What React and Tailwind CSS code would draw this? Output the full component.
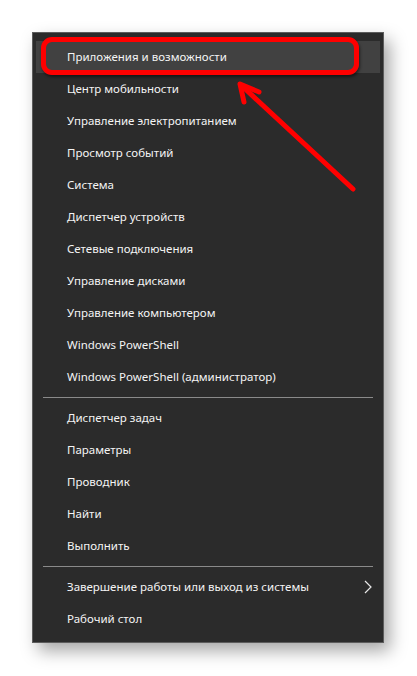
import React from "react";

const group1 = [
  "Приложения и возможности",
  "Центр мобильности",
  "Управление электропитанием",
  "Просмотр событий",
  "Система",
  "Диспетчер устройств",
  "Сетевые подключения",
  "Управление дисками",
  "Управление компьютером",
  "Windows PowerShell",
  "Windows PowerShell (администратор)",
];
const group2 = ["Диспетчер задач", "Параметры", "Проводник", "Найти", "Выполнить"];

function Row({ label, active, chevron }) {
  return (
    <div
      className={
        "h-[32px] flex items-center text-[11.5px] text-[#f4f4f4] " +
        (active ? "bg-[#414141] mx-[3px] pl-[31px] pr-[7px]" : "pl-[34px] pr-[10px]")
      }
    >
      <span className="flex-1 whitespace-nowrap">{label}</span>
      {chevron && (
        <svg width="8" height="14" viewBox="0 0 8 14" className="mr-[1px]">
          <path d="M1 1 L7 7 L1 13" fill="none" stroke="#e8e8e8" strokeWidth="1.2" />
        </svg>
      )}
    </div>
  );
}

function Sep() {
  return (
    <div className="h-[9px] flex items-center px-[10px]">
      <div className="h-px w-full bg-[#8a8a8a]" />
    </div>
  );
}

export default function App() {
  return (
    <div
      className="w-[417px] h-[676px] bg-white relative overflow-hidden"
      style={{ fontFamily: '"Noto Sans", "Open Sans", sans-serif' }}
    >
      <div className="absolute left-[32px] top-[32px] w-[352px] h-[611px] bg-[#2b2b2b] border border-[#5c5c5c] shadow-[6px_8px_16px_rgba(0,0,0,0.35)] pt-[8px]">
        {group1.map((l, i) => (
          <Row key={l} label={l} active={i === 0} />
        ))}
        <Sep />
        {group2.map((l) => (
          <Row key={l} label={l} />
        ))}
        <Sep />
        <Row label="Завершение работы или выход из системы" chevron />
        <Row label="Рабочий стол" />
      </div>
      {/* annotation box */}
      <div className="absolute left-[41px] top-[37px] w-[318px] h-[38px] border-[5px] border-[#ff0000] rounded-[11px] shadow-[1px_2px_3px_rgba(0,0,0,0.5)]" />
      {/* arrow */}
      <svg className="absolute left-0 top-0" width="417" height="676" viewBox="0 0 417 676">
        <g stroke="#ff0000" strokeWidth="5" strokeLinecap="round" strokeLinejoin="round" fill="none">
          <path d="M353 189 L242 86" />
          <path d="M244 102 L240 84 L259 92" />
        </g>
      </svg>
    </div>
  );
}
